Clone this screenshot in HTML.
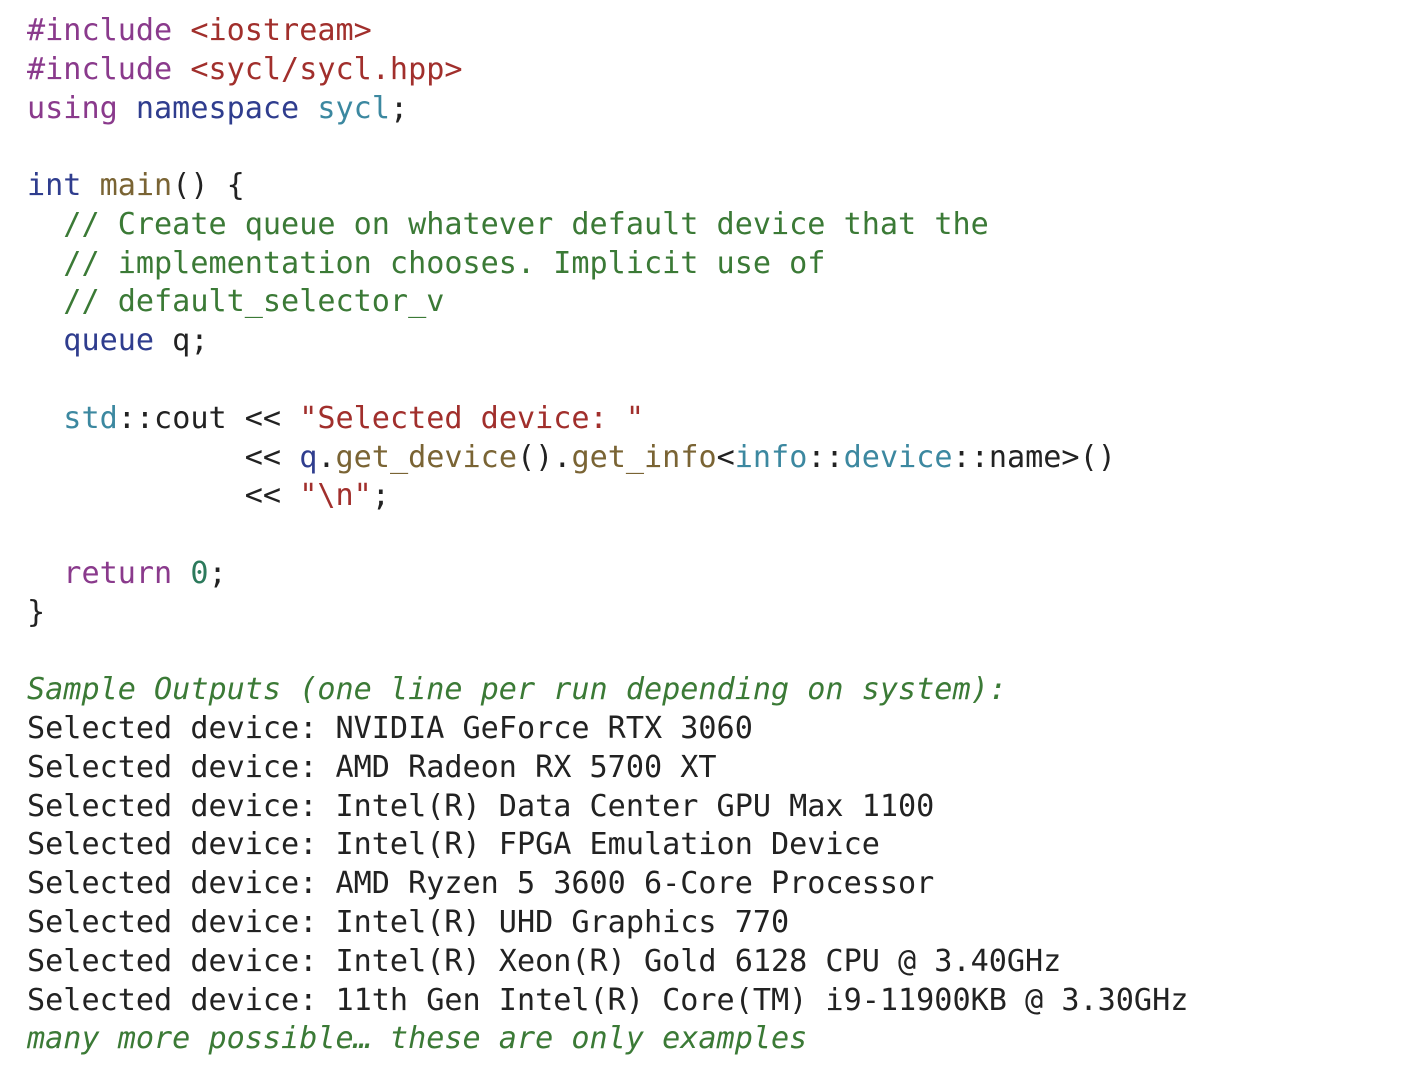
<!DOCTYPE html>
<html><head><meta charset="utf-8"><style>
html,body{margin:0;background:#fff;width:1420px;height:1086px;overflow:hidden}
pre{margin:0;position:absolute;left:27px;top:12px;font-family:"DejaVu Sans Mono","Liberation Mono",monospace;font-size:30.15px;line-height:38.78px;color:#222}
.p{color:#8a3a8c}.r{color:#a12f2c}.b{color:#2f3d8e}.t{color:#3c88a0}.m{color:#7a6434}.g{color:#3b7a36}.n{color:#2c7a5c}.i{color:#3b7a36;font-style:italic}
</style></head><body><pre><span class="p">#include</span> <span class="r">&lt;iostream&gt;</span>
<span class="p">#include</span> <span class="r">&lt;sycl/sycl.hpp&gt;</span>
<span class="p">using</span> <span class="b">namespace</span> <span class="t">sycl</span>;

<span class="b">int</span> <span class="m">main</span>() {
  <span class="g">// Create queue on whatever default device that the</span>
  <span class="g">// implementation chooses. Implicit use of</span>
  <span class="g">// default_selector_v</span>
  <span class="b">queue</span> q;

  <span class="t">std</span>::cout &lt;&lt; <span class="r">"Selected device: "</span>
            &lt;&lt; <span class="b">q</span>.<span class="m">get_device</span>().<span class="m">get_info</span>&lt;<span class="t">info</span>::<span class="t">device</span>::name&gt;()
            &lt;&lt; <span class="r">"\n"</span>;

  <span class="p">return</span> <span class="n">0</span>;
}

<span class="i">Sample Outputs (one line per run depending on system):</span>
Selected device: NVIDIA GeForce RTX 3060
Selected device: AMD Radeon RX 5700 XT
Selected device: Intel(R) Data Center GPU Max 1100
Selected device: Intel(R) FPGA Emulation Device
Selected device: AMD Ryzen 5 3600 6-Core Processor
Selected device: Intel(R) UHD Graphics 770
Selected device: Intel(R) Xeon(R) Gold 6128 CPU @ 3.40GHz
Selected device: 11th Gen Intel(R) Core(TM) i9-11900KB @ 3.30GHz
<span class="i">many more possible… these are only examples</span></pre></body></html>
